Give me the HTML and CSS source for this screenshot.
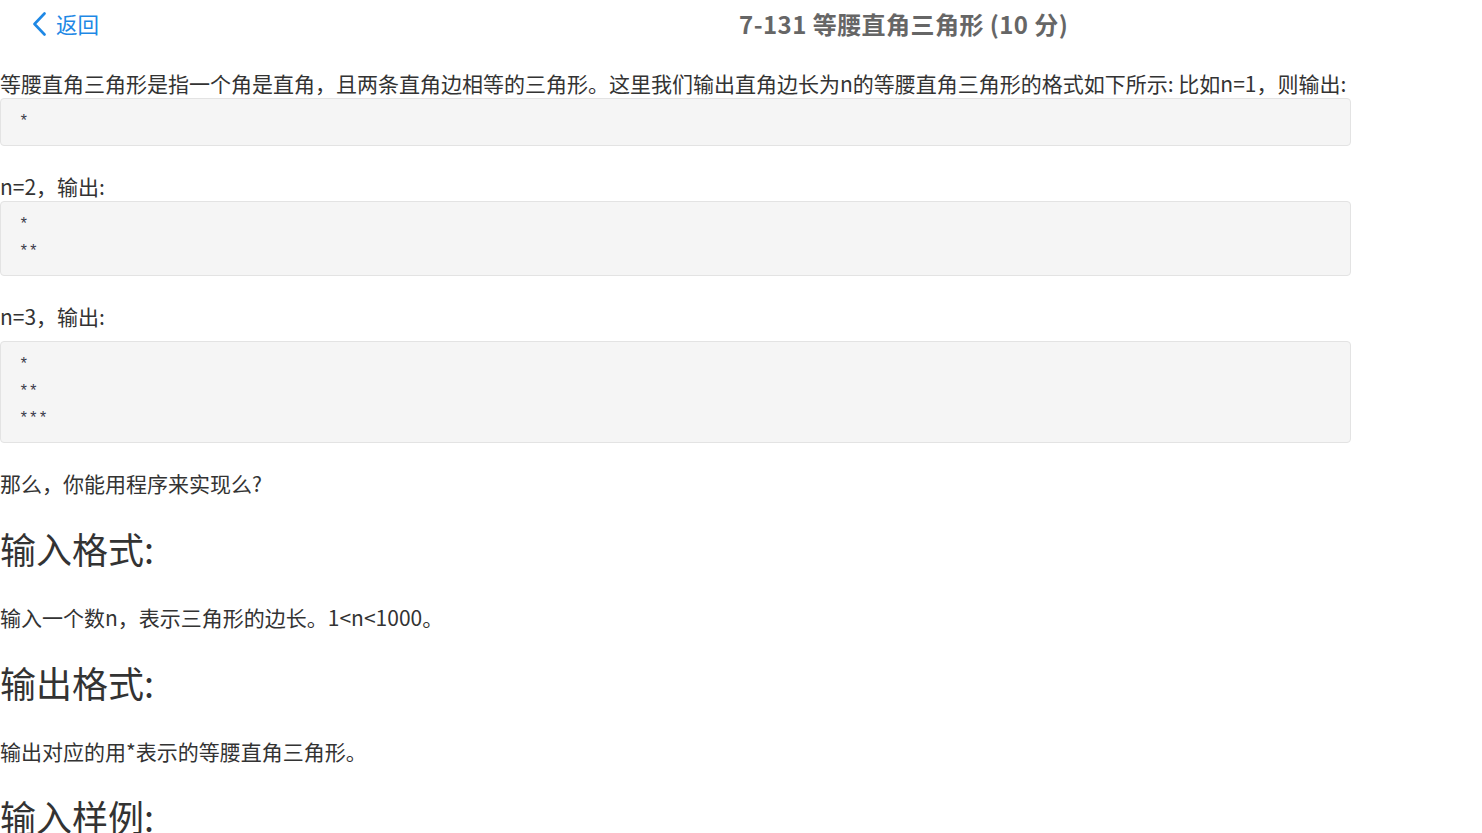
FILE: index.html
```html
<!DOCTYPE html>
<html lang="zh-CN">
<head>
    <meta charset="UTF-8">
    <meta name="viewport" content="width=device-width, initial-scale=1.0">
    <title>7-131 等腰直角三角形</title>
    <link rel="stylesheet" href="styles.css">
</head>
<body>

    <div class="header">
        <a class="back" href="#">
            <svg width="15" height="24" viewBox="0 0 15 24">
                <path d="M12.5 1.5 L2.5 12 L12.5 22.5" fill="none" stroke="currentColor" stroke-width="2.6" stroke-linecap="round" stroke-linejoin="round"/>
            </svg>
            <span>返回</span>
        </a>
        <div class="title">7-131 等腰直角三角形 (10 分)</div>
    </div>

    <div class="problem">
        <p class="intro">等腰直角三角形是指一个角是直角，且两条直角边相等的三角形。这里我们输出直角边长为n的等腰直角三角形的格式如下所示: 比如n=1，则输出:</p>
        <pre class="sample">*</pre>

        <p class="label">n=2，输出:</p>
        <pre class="sample">*
**</pre>

        <p class="label">n=3，输出:</p>
        <pre class="sample spaced">*
**
***</pre>

        <p class="ask">那么，你能用程序来实现么?</p>

        <h2>输入格式:</h2>
        <p class="desc">输入一个数n，表示三角形的边长。1&lt;n&lt;1000。</p>

        <h2>输出格式:</h2>
        <p class="desc">输出对应的用*表示的等腰直角三角形。</p>

        <h2>输入样例:</h2>
    </div>

</body>
</html>
```

FILE: styles.css
```css
body {
    margin: 0;
    font-family: "Noto Sans CJK SC", "Noto Sans", sans-serif;
    color: #333;
    background: #fff;
}
.header {
    display: flex;
    align-items: center;
    height: 47px;
}
.back {
    display: flex;
    align-items: center;
    gap: 9px;
    margin-left: 32px;
    color: #1e88e5;
    text-decoration: none;
    font-size: 21.5px;
}
.title {
    margin-left: 640px;
    font-size: 24px;
    font-weight: bold;
    letter-spacing: 0.45px;
    color: #666;
}
.problem {
    width: 1351px;
    font-size: 21px;
}
p {
    margin: 0;
    line-height: 28px;
}
.intro {
    margin-top: 22px;
    margin-bottom: 1px;
}
.sample {
    margin: 0;
    padding: 9.5px 18px;
    background: #f5f5f5;
    border: 1px solid #e3e3e3;
    border-radius: 4px;
    font-family: "Liberation Mono", monospace;
    font-size: 16px;
    line-height: 27px;
    color: #3a3a4a;
}
.label {
    margin-top: 26px;
    margin-bottom: 1px;
}
.spaced {
    margin-top: 11px;
}
.ask {
    margin-top: 26px;
}
h2 {
    margin: 26px 0 0;
    font-size: 36px;
    font-weight: normal;
    line-height: 50px;
}
.desc {
    margin-top: 30px;
}
```
